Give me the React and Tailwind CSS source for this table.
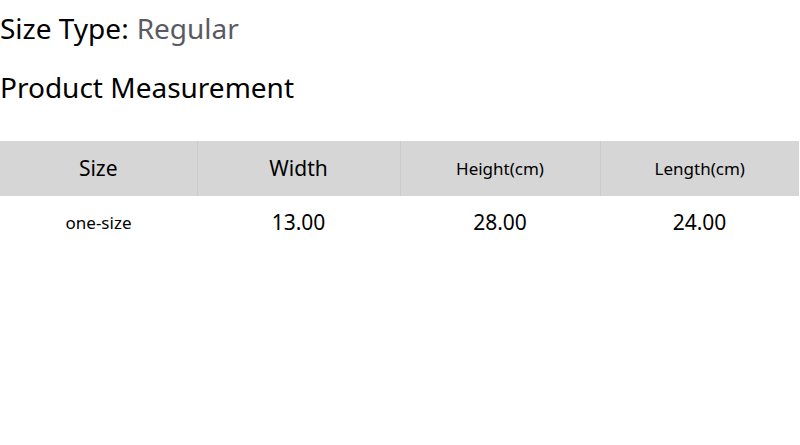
const columns = ['Size', 'Width', 'Height(cm)', 'Length(cm)'];
const rows = [['one-size', '13.00', '28.00', '24.00']];

export default function App() {
  return (
    <div className="w-[800px] bg-white text-black font-['Noto_Sans',sans-serif]">
      <div className="flex h-[56px] items-center text-[28px] leading-none">
        <span>Size Type:</span>
        <span className="ml-2 text-[#5a5a62]">Regular</span>
      </div>
      <h2 className="flex h-[62px] items-center text-[28px] font-normal leading-none">Product Measurement</h2>
      <table className="mt-[23px] w-[799px] table-fixed border-collapse">
        <colgroup>
          <col className="w-[197px]" />
          <col className="w-[203px]" />
          <col className="w-[200px]" />
          <col className="w-[199px]" />
        </colgroup>
        <thead>
          <tr className="h-[55px] bg-[#d6d6d6]">
            {columns.map((c, i) => (
              <th
                key={c}
                className={`border-l border-[#cbcbcb] first:border-l-0 font-normal ${i < 2 ? 'text-[21px]' : 'text-[17px]'}`}
              >
                {c}
              </th>
            ))}
          </tr>
        </thead>
        <tbody>
          {rows.map((r) => (
            <tr key={r[0]} className="h-[54px]">
              {r.map((v, i) => (
                <td key={i} className={`text-center ${i === 0 ? 'text-[17px]' : 'text-[21px]'}`}>
                  {v}
                </td>
              ))}
            </tr>
          ))}
        </tbody>
      </table>
    </div>
  );
}
